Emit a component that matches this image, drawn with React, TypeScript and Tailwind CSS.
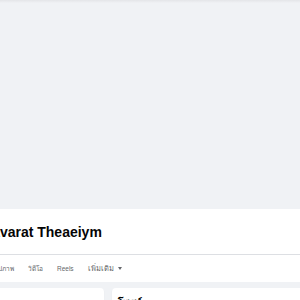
const tabs = ['รูปภาพ', 'วิดีโอ', 'Reels'];

const App = () => {
  return (
    <div className="w-[300px] h-[300px] overflow-hidden bg-[#f0f2f5] font-['Liberation_Sans',sans-serif]">
      {/* cover area */}
      <div className="h-[209px] bg-[#f0f2f5]">
        <div className="h-[3px] bg-gradient-to-b from-[#e4e5e8] to-[#f0f2f5]" />
      </div>

      {/* header */}
      <div className="bg-white">
        <div className="h-[46px] flex items-center border-b border-[#dddfe3] overflow-hidden">
          <h1 className="-ml-[25px] whitespace-nowrap text-[14px] leading-none font-bold text-[#050505]">
            Thavarat Theaeiym
          </h1>
        </div>
        <nav className="h-[27px] flex items-center overflow-hidden text-[6.5px] text-[#65676b] whitespace-nowrap">
          <div className="flex items-center gap-[14px] -ml-[5px]">
            {tabs.map((t) => (
              <span key={t}>{t}</span>
            ))}
            <span className="flex items-center gap-[4px] text-[7.5px]">
              เพิ่มเติม
              <svg width="4" height="3" viewBox="0 0 4 3" fill="#65676b">
                <path d="M0 0h4L2 3z" />
              </svg>
            </span>
          </div>
        </nav>
      </div>

      {/* columns */}
      <div className="mt-[6px] flex gap-[8px]">
        <div className="w-[104px] h-[40px] bg-white rounded-r-[4px] shadow-[0_1px_1px_rgba(0,0,0,0.1)]" />
        <div className="flex-1 h-[40px] bg-white rounded-l-[4px] shadow-[0_1px_1px_rgba(0,0,0,0.1)] px-[6px] pt-[7px]">
          <h2 className="text-[10px] font-bold text-[#050505]">โพสต์</h2>
        </div>
      </div>
    </div>
  );
};

export default App;
